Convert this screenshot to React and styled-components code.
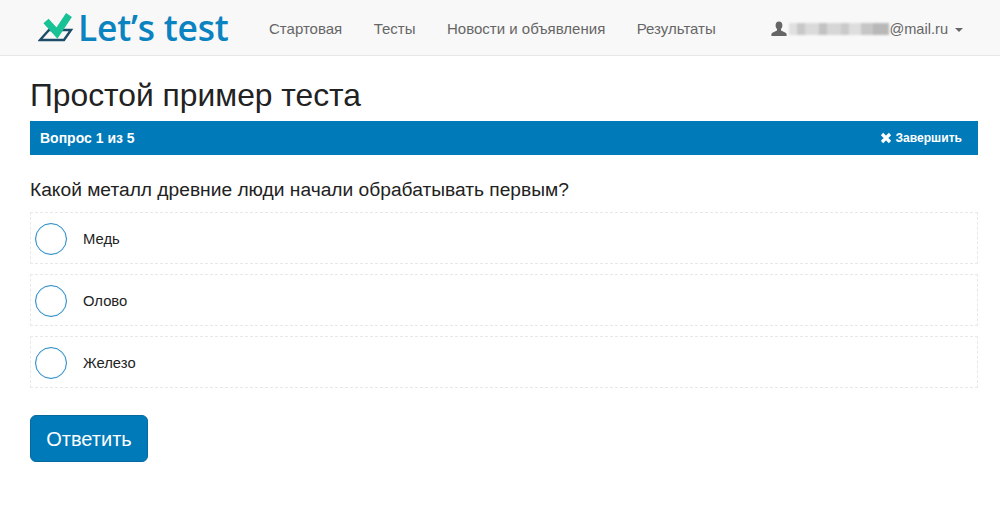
import styled, { createGlobalStyle } from 'styled-components';

const GlobalStyle = createGlobalStyle`
  html, body {
    margin: 0;
    padding: 0;
    background: #fff;
    font-family: "Liberation Sans", Arial, sans-serif;
    color: #222;
  }
  * { box-sizing: border-box; }
`;

const Navbar = styled.nav`
  height: 56px;
  background: #f8f8f8;
  border-bottom: 1px solid #e7e7e7;
  display: flex;
  align-items: center;
  padding: 2px 37px 0 38px;
`;

const Brand = styled.a`
  display: flex;
  align-items: center;
  width: 231px;
  margin-top: -3px;
  color: #0a83c0;
  font-family: "Open Sans", sans-serif;
  font-weight: 600;
  font-size: 35.4px;
  letter-spacing: -0.2px;
  gap: 4px;
`;

const Menu = styled.div`
  display: flex;
  gap: 31.5px;
  font-size: 15px;
  color: #666;
`;

const UserMenu = styled.div`
  margin-left: auto;
  display: flex;
  align-items: center;
  font-size: 14.6px;
  color: #666;
`;

const Blurred = styled.span`
  display: inline-block;
  width: 100px;
  height: 12px;
  margin-left: 2px;
  background: linear-gradient(90deg, #e0e0e0 0 8px, #c8c8c8 8px 16px, #dadada 16px 30px, #c2c2c2 30px 38px, #d6d6d6 38px 52px, #cacaca 52px 60px, #dedede 60px 72px, #c6c6c6 72px 84px, #b8b8b8 84px 100px);
  filter: blur(1.2px);
`;

const Caret = styled.span`
  width: 0;
  height: 0;
  margin-left: 7px;
  margin-top: 2px;
  border-top: 4px solid #666;
  border-left: 4px solid transparent;
  border-right: 4px solid transparent;
`;

const Main = styled.main`
  padding: 0 22px 0 30px;
`;

const Title = styled.h1`
  margin: 19px 0 0;
  font-size: 31.8px;
  font-weight: 400;
  line-height: 40px;
  color: #222;
`;

const QuestionBar = styled.div`
  margin-top: 6px;
  height: 34px;
  background: #007ab9;
  color: #fff;
  display: flex;
  align-items: center;
  justify-content: space-between;
  padding: 0 16px 0 10px;
`;

const Counter = styled.span`
  font-size: 14px;
  font-weight: 700;
`;

const FinishLink = styled.span`
  display: flex;
  align-items: center;
  gap: 3px;
  font-size: 12.1px;
  font-weight: 700;
`;

const Question = styled.h2`
  margin: 24px 0 11px;
  font-size: 19.2px;
  font-weight: 400;
  line-height: 22px;
`;

const Options = styled.div`
  display: flex;
  flex-direction: column;
  gap: 10px;
`;

const Option = styled.label`
  height: 52px;
  display: flex;
  align-items: center;
  gap: 16px;
  padding: 1px 0 0 4px;
  border: 1px dashed #e8e8e8;
  font-size: 14.8px;
  color: #222;
`;

const Radio = styled.span`
  width: 32px;
  height: 32px;
  border-radius: 50%;
  border: 1px solid #2b8cc8;
  box-shadow: inset 0 0 1px #5aa8d8;
  background: #fff;
`;

const SubmitButton = styled.button`
  display: block;
  margin-top: 27px;
  width: 118px;
  height: 47px;
  background: #007ab9;
  border: 1px solid #066a9f;
  border-radius: 6px;
  color: #fff;
  font-family: inherit;
  font-size: 20px;
  padding: 2px 0 0;
`;

const Logo = () => (
  <svg width="36" height="30" viewBox="0 0 36 30">
    <path d="M11 18 H33 L26 28 H2 Z" fill="none" stroke="#1d4c68" strokeWidth="2.4" />
    <path d="M8 9 L19 21 L31 3" fill="none" stroke="#19c295" strokeWidth="7" />
  </svg>
);

const UserIcon = () => (
  <svg width="16" height="16" viewBox="0 0 16 16">
    <path
      fill="#666"
      d="M8 0.5c2.2 0 3.4 1.6 3.4 3.8 0 1.6-.6 3-1.4 3.8v1.4l4.6 2.2c.7.4 1 .9 1 1.6V15H.4v-1.700c0-.7.3-1.2 1-1.6L6 9.5V8.1c-.8-.8-1.4-2.200-1.4-3.800C4.600 2.100 5.800.5 8 .5z"
    />
  </svg>
);

const CloseIcon = () => (
  <svg width="12" height="12" viewBox="0 0 12 12">
    <path d="M2 2 L10 10 M10 2 L2 10" stroke="#fff" strokeWidth="3.2" />
  </svg>
);

const answers = ['Медь', 'Олово', 'Железо'];

const App = () => (
  <>
    <GlobalStyle />
    <Navbar>
      <Brand>
        <Logo />
        Let’s test
      </Brand>
      <Menu>
        <span>Стартовая</span>
        <span>Тесты</span>
        <span>Новости и объявления</span>
        <span>Результаты</span>
      </Menu>
      <UserMenu>
        <UserIcon />
        <Blurred />
        @mail.ru
        <Caret />
      </UserMenu>
    </Navbar>
    <Main>
      <Title>Простой пример теста</Title>
      <QuestionBar>
        <Counter>Вопрос 1 из 5</Counter>
        <FinishLink>
          <CloseIcon />
          Завершить
        </FinishLink>
      </QuestionBar>
      <Question>Какой металл древние люди начали обрабатывать первым?</Question>
      <Options>
        {answers.map((answer) => (
          <Option key={answer}>
            <Radio />
            {answer}
          </Option>
        ))}
      </Options>
      <SubmitButton>Ответить</SubmitButton>
    </Main>
  </>
);

export default App;
